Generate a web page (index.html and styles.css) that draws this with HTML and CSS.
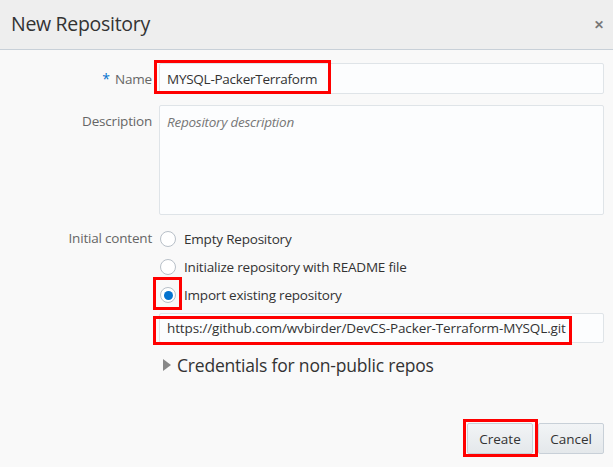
FILE: index.html
```html
<!DOCTYPE html>
<html>
<head>
<meta charset="utf-8">
<link rel="stylesheet" href="styles.css">
</head>
<body>
<div class="dialog">
  <div class="header">
    <div class="title">New Repository</div>
    <div class="close">&#x2715;</div>
  </div>
  <div class="form">
    <div class="row row-name">
      <label class="label"><span class="req">*</span> Name</label>
      <div class="field">
        <div class="input">MYSQL-PackerTerraform</div>
        <div class="mark mark-name"></div>
      </div>
    </div>
    <div class="row row-desc">
      <label class="label label-top">Description</label>
      <div class="field">
        <div class="textarea">Repository description</div>
      </div>
    </div>
    <div class="row row-init">
      <label class="label label-init">Initial content</label>
      <div class="field">
        <div class="radio-row"><span class="radio"></span><span>Empty Repository</span></div>
        <div class="radio-row"><span class="radio"></span><span>Initialize repository with README file</span></div>
        <div class="radio-row"><span class="radio checked"></span><span>Import existing repository</span><div class="mark mark-radio"></div></div>
        <div class="url-wrap">
          <div class="input url">https://github.com/wvbirder/DevCS-Packer-Terraform-MYSQL.git</div>
          <div class="mark mark-url"></div>
        </div>
        <div class="creds"><span class="tri"></span><span>Credentials for non-public repos</span></div>
      </div>
    </div>
    <div class="buttons">
      <div class="btn-wrap">
        <button class="btn">Create</button>
        <div class="mark mark-btn"></div>
      </div>
      <button class="btn">Cancel</button>
    </div>
  </div>
</div>
</body>
</html>
```

FILE: styles.css
```css
* { box-sizing: border-box; }
html, body { margin: 0; padding: 0; }
body {
  width: 613px;
  height: 467px;
  background: #f9f9f9;
  font-family: "Open Sans", "Noto Sans", sans-serif;
  color: #333;
  overflow: hidden;
}
.dialog { width: 613px; height: 467px; background: #f9f9f9; }
.header {
  height: 50px;
  background: #eeeeee;
  border-bottom: 1px solid #c8d0d8;
  display: flex;
  align-items: center;
  justify-content: space-between;
  padding: 0 9px 2px 11px;
}
.title { font-size: 19.5px; color: #333; letter-spacing: -0.3px; }
.close { font-size: 12px; color: #777; font-weight: bold; margin-top: 2px; }
.form { padding: 13px 9px 0 0; }
.row {
  display: grid;
  grid-template-columns: 152px 445px;
  column-gap: 7px;
}
.label {
  font-size: 13.5px;
  color: #666;
  text-align: right;
  letter-spacing: -0.2px;
}
.row-name .label { align-self: center; }
.req { color: #0572ce; font-size: 14px; margin-right: 2px; }
.label-top { padding-top: 7px; }
.label-init { padding-top: 4px; }
.field { position: relative; }
.input {
  height: 31px;
  border: 1px solid #dfe4e8;
  border-radius: 2px;
  background: #fcfdfe;
  font-size: 13.5px;
  color: #333;
  padding: 0 7px;
  display: flex;
  align-items: center;
  letter-spacing: -0.25px;
}
.row-desc { margin-top: 11px; }
.textarea {
  height: 110px;
  border: 1px solid #dfe4e8;
  border-radius: 2px;
  background: #fcfdfe;
  font-size: 13.5px;
  color: #777;
  font-style: italic;
  padding: 7px 7px;
  letter-spacing: -0.25px;
}
.row-init { margin-top: 10px; }
.radio-row {
  position: relative;
  height: 28px;
  display: flex;
  align-items: center;
  font-size: 13.5px;
  color: #333;
  letter-spacing: -0.2px;
}
.radio {
  width: 16px;
  height: 16px;
  border: 1px solid #b8c0c8;
  border-radius: 50%;
  background: #fff;
  margin-left: 1px;
  margin-right: 8px;
  display: flex;
  align-items: center;
  justify-content: center;
  flex: none;
}
.radio.checked::after {
  content: "";
  width: 9px;
  height: 9px;
  border-radius: 50%;
  background: #0572ce;
}
.url-wrap { position: relative; margin-top: 4px; }
.url { height: 30px; letter-spacing: -0.12px; }
.creds {
  margin-top: 11px;
  height: 22px;
  display: flex;
  align-items: center;
  font-size: 17.5px;
  color: #333;
  letter-spacing: -0.2px;
}
.tri {
  width: 0; height: 0;
  border-top: 6px solid transparent;
  border-bottom: 6px solid transparent;
  border-left: 8px solid #888;
  margin-left: 4px;
  margin-right: 6px;
}
.buttons {
  margin-top: 47px;
  display: flex;
  justify-content: flex-end;
  gap: 5px;
}
.btn-wrap { position: relative; display: flex; }
.btn {
  height: 31px;
  width: 66px;
  border: 1px solid #c8d0d8;
  border-radius: 2px;
  background: linear-gradient(#f2f4f6, #e4e8eb);
  font-family: "Open Sans", "Noto Sans", sans-serif;
  font-size: 13.5px;
  color: #333;
  padding: 0;
}
.mark {
  position: absolute;
  border: 3px solid #ff0000;
  pointer-events: none;
}
.mark-name { left: -5px; top: -3px; width: 177px; height: 34px; }
.mark-radio { left: -6px; top: -4px; width: 29px; height: 33px; }
.mark-url { left: -6px; top: 3px; width: 419px; height: 29px; }
.mark-btn { left: -4px; top: -4px; width: 75px; height: 38px; }
```
